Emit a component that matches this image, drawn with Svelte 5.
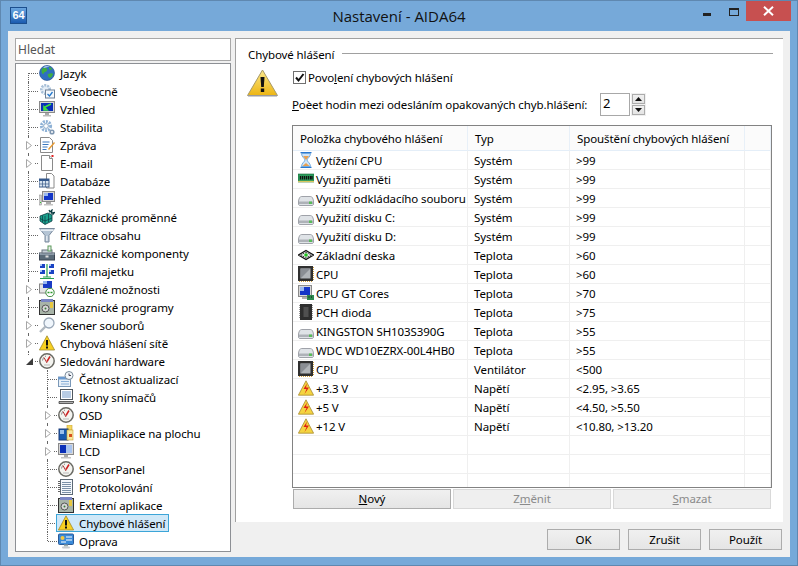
<script>
  const tree = [
    { t: 'Jazyk', i: 'globe' },
    { t: 'Všeobecně', i: 'gearcheck' },
    { t: 'Vzhled', i: 'monitorgreen' },
    { t: 'Stabilita', i: 'gears' },
    { t: 'Zpráva', i: 'note', x: 1 },
    { t: 'E-mail', i: 'page', x: 1 },
    { t: 'Databáze', i: 'db' },
    { t: 'Přehled', i: 'pc' },
    { t: 'Zákaznické proměnné', i: 'cube' },
    { t: 'Filtrace obsahu', i: 'funnel' },
    { t: 'Zákaznické komponenty', i: 'toolbox' },
    { t: 'Profil majetku', i: 'profile' },
    { t: 'Vzdálené možnosti', i: 'remote', x: 1 },
    { t: 'Zákaznické programy', i: 'programs' },
    { t: 'Skener souborů', i: 'magnifier', x: 1 },
    { t: 'Chybová hlášení sítě', i: 'warn', x: 1 },
    { t: 'Sledování hardware', i: 'gauge', open: 1, last: 1 },
    { t: 'Četnost aktualizací', i: 'clock', d: 1 },
    { t: 'Ikony snímačů', i: 'screen', d: 1 },
    { t: 'OSD', i: 'gauge', d: 1, x: 1 },
    { t: 'Miniaplikace na plochu', i: 'widget', d: 1, x: 1 },
    { t: 'LCD', i: 'lcd', d: 1, x: 1 },
    { t: 'SensorPanel', i: 'gauge', d: 1 },
    { t: 'Protokolování', i: 'log', d: 1 },
    { t: 'Externí aplikace', i: 'programs', d: 1 },
    { t: 'Chybové hlášení', i: 'warn', d: 1, sel: 1 },
    { t: 'Oprava', i: 'repair', d: 1, last: 1 }
  ];
  const rows = [
    ['hourglass', 'Vytížení CPU', 'Systém', '>99'],
    ['ram', 'Využití paměti', 'Systém', '>99'],
    ['disk', 'Využití odkládacího souboru', 'Systém', '>99'],
    ['disk', 'Využití disku C:', 'Systém', '>99'],
    ['disk', 'Využití disku D:', 'Systém', '>99'],
    ['mobo', 'Základní deska', 'Teplota', '>60'],
    ['cpu', 'CPU', 'Teplota', '>60'],
    ['gt', 'CPU GT Cores', 'Teplota', '>70'],
    ['pch', 'PCH dioda', 'Teplota', '>75'],
    ['disk', 'KINGSTON SH103S390G', 'Teplota', '>55'],
    ['disk', 'WDC WD10EZRX-00L4HB0', 'Teplota', '>55'],
    ['cpu', 'CPU', 'Ventilátor', '<500'],
    ['volt', '+3.3 V', 'Napětí', '<2.95, >3.65'],
    ['volt', '+5 V', 'Napětí', '<4.50, >5.50'],
    ['volt', '+12 V', 'Napětí', '<10.80, >13.20'],
    ['', '', '', ''],
    ['', '', '', ''],
    ['', '', '', '']
  ];
</script>

{#snippet icon(n)}
  <svg class="ico" width="16" height="16" viewBox="0 0 16 16">
    {#if n === 'globe'}
      <circle cx="8" cy="8" r="7.5" fill="#2f6fc0" stroke="#1c4a8a" stroke-width=".6"/>
      <path d="M3 4c2-2 4-1 5 0s-1 3-2 3-1 2-2 2-2-3-1-5zM9 9c2-1 5-1 5 0s-2 4-3 4-3-3-2-4zM10 2c1 0 3 1 3 2s-2 1-3 0z" fill="#3fae3f"/>
      <path d="M4 2.500C6 1 9 1 11 2 8 2 6 3 4 2.500z" fill="#cfe4fa"/>
    {:else if n === 'gearcheck'}
      <circle cx="6.500" cy="6.500" r="4.200" fill="#e4edf6" stroke="#a8c0d8" stroke-width="2.600" stroke-dasharray="2 1"/>
      <rect x="6.500" y="7" width="9" height="8" fill="#f4f8fc" stroke="#6c7f94"/>
      <path d="M8.500 11l2 2 3-4" fill="none" stroke="#2277cc" stroke-width="1.300"/>
    {:else if n === 'monitorgreen'}
      <rect x=".5" y=".5" width="15" height="11" fill="#d8d8d8" stroke="#8a8a8a"/>
      <rect x="2" y="2" width="12" height="8" fill="#0a2fb8"/>
      <path d="M12 3L6 6M5 9l0-3 3 3z" stroke="#3fe03f" stroke-width="1.600" fill="#3fe03f"/>
      <rect x="6" y="12" width="4" height="2" fill="#aaa"/><rect x="4" y="14" width="8" height="1.500" fill="#bbb"/>
    {:else if n === 'gears'}
      <circle cx="7" cy="7" r="4.600" fill="#fff" stroke="#8fb2d6" stroke-width="3" stroke-dasharray="2 1"/>
      <circle cx="7" cy="7" r="2.400" fill="#fff" stroke="#6f94ba" stroke-width=".8"/>
      <circle cx="13" cy="13" r="1.800" fill="#fff" stroke="#7e96b0" stroke-width="1.600"/>
    {:else if n === 'note'}
      <path d="M1.500.5h9l3 3v12h-12z" fill="#fff" stroke="#8a8a8a"/>
      <path d="M3.500 5h7M3.500 7.500h6M3.500 10h5M3.500 12.500h4" stroke="#3a78c0"/>
      <path d="M9 12l6-7 1 1-6 7z" fill="#e89a30"/>
    {:else if n === 'page'}
      <path d="M2.500.5h8l3 3v12h-11z" fill="#fff" stroke="#8a8a8a"/>
      <path d="M10.500.5v3h3" fill="#eee" stroke="#8a8a8a"/>
      <rect x="12.500" y="0" width="2" height="2" fill="#e02020"/>
    {:else if n === 'db'}
      <path d="M7.500.5h5l2.500 2.500v12H7.500z" fill="#fff" stroke="#8a8a8a"/>
      <rect x="0" y="6" width="10" height="8" fill="#d8e4f0" stroke="#3a5a88"/>
      <rect x="0" y="6" width="10" height="2" fill="#34588c"/>
      <path d="M3.500 8v6M6.500 8v6M0 11h10" stroke="#3a5a88" stroke-width=".7"/>
    {:else if n === 'pc'}
      <rect x="0" y="4" width="2.500" height="10" fill="#cfcfcf" stroke="#888" stroke-width=".5"/>
      <rect x="1" y="11" width="1" height="1" fill="#3c3"/>
      <rect x="3.500" y="0.500" width="12" height="10" fill="#d8d8d8" stroke="#8a8a8a"/>
      <rect x="5" y="2" width="9" height="7" fill="#1436c8"/><rect x="5" y="2" width="4" height="3" fill="#9ab8f0"/>
      <rect x="7" y="11" width="5" height="2" fill="#aaa"/><rect x="5" y="13" width="9" height="1.500" fill="#c4c4c4"/>
    {:else if n === 'cube'}
      <path d="M1 7l8-3 4 2v6l-7 3.500L1 12z" fill="#1aa08c" stroke="#0a3a40" stroke-width=".8"/>
      <path d="M1 9.500l5 2.500 7-3M6 7v8M3.500 6.500v7M9.500 5v8" stroke="#0a3a40" stroke-width=".7" fill="none"/>
      <path d="M10 1l1 2 2-2-.5 3 3-.5-2 2.500" fill="none" stroke="#0a3a40" stroke-width="1.200"/>
    {:else if n === 'funnel'}
      <path d="M.5 1.500h15L10 8.500v6.500H6V8.500z" fill="#b4c4d4" stroke="#7a8a9c"/>
      <path d="M1 2.500h14l-1 1.500H2z" fill="#e8eef4"/><rect x="7" y="9" width="1.500" height="5" fill="#dfe6ee"/>
    {:else if n === 'toolbox'}
      <rect x=".5" y="8" width="15" height="7" fill="#5a6a78" stroke="#3a4450"/>
      <rect x=".5" y="8" width="15" height="2" fill="#8c9aa8"/>
      <rect x="3" y="5" width="10" height="3" fill="#c8d0d8" stroke="#6a7480"/>
      <rect x="9" y="1" width="3" height="5" fill="#eee" stroke="#5a9a5a"/>
      <rect x="6.500" y="10.500" width="3" height="2" fill="#ddd"/>
    {:else if n === 'profile'}
      <rect x="1" y="1" width="5" height="4" fill="#1a44c4"/><rect x="10" y="1" width="5" height="4" fill="#1a44c4"/>
      <rect x="1" y="7" width="5" height="4" fill="#1a44c4"/><rect x="10" y="7" width="5" height="4" fill="#1a44c4"/>
      <rect x="1" y="1" width="2" height="2" fill="#a8c4f4"/><rect x="10" y="1" width="2" height="2" fill="#a8c4f4"/>
      <rect x="1" y="7" width="2" height="2" fill="#a8c4f4"/><rect x="10" y="7" width="2" height="2" fill="#a8c4f4"/>
      <path d="M8 1v13M4 14h8M1 15.500h14" stroke="#27a050" stroke-width="1.200"/>
    {:else if n === 'remote'}
      <rect x=".5" y="3" width="10" height="9" fill="#e4e4e4" stroke="#888"/>
      <rect x="4" y="0" width="9" height="7" fill="#1a3cc4"/><rect x="4" y="0" width="4" height="3" fill="#9ab8f0"/>
      <circle cx="11" cy="11.500" r="4.200" fill="#fff" stroke="#3a8a3a"/>
      <path d="M8.500 11.500h2M11.500 11.500h2" stroke="#2a9a2a" stroke-width="1.300"/>
    {:else if n === 'programs'}
      <rect x=".5" y="1.500" width="15" height="14" fill="#a8b4a8" stroke="#303030"/>
      <rect x="2" y="0" width="12" height="3" fill="#7a86c4"/>
      <rect x="11" y="3" width="3" height="6" fill="#e8c840"/>
      <circle cx="6.500" cy="9.500" r="3.500" fill="#d8d8d8" stroke="#555"/><circle cx="6.500" cy="9.500" r="1" fill="#3a7a3a"/>
    {:else if n === 'magnifier'}
      <circle cx="10" cy="6" r="5" fill="#f0f6fc" stroke="#9aa8b8" stroke-width="1.300"/>
      <path d="M6.500 9.500L1 15" stroke="#b0b8c0" stroke-width="2.400"/>
    {:else if n === 'warn'}
      <path d="M8 .8L15.600 15H.4z" fill="#f8d020" stroke="#a08a30" stroke-width=".8"/>
      <rect x="7" y="5" width="2" height="5.500" fill="#111"/><rect x="7" y="11.500" width="2" height="2" fill="#111"/>
    {:else if n === 'gauge'}
      <circle cx="8" cy="8" r="7.200" fill="#f4f4f0" stroke="#6a6a64" stroke-width="1.500"/>
      <path d="M8 8.500L11 3.500" stroke="#d02020" stroke-width="1.500"/>
      <path d="M3.500 7.500L4.500 4.500M6 3.500L7 3" stroke="#8a8a8a"/>
      <path d="M5 4.500L8 10" stroke="#b03030"/>
      <path d="M5 12h6" stroke="#bbb"/>
    {:else if n === 'clock'}
      <rect x=".5" y="6" width="12" height="9.500" fill="#e8f0f8" stroke="#7a98b8"/>
      <rect x=".5" y="6" width="12" height="2.500" fill="#6a9ad0"/>
      <path d="M3 10.500h8M3 13h8" stroke="#8ab0d8"/>
      <circle cx="11" cy="4.500" r="4" fill="#f4f8fc" stroke="#7a8a98"/>
      <path d="M11 2.500v2h2" fill="none" stroke="#445"/>
    {:else if n === 'screen'}
      <rect x="2.500" y=".5" width="12" height="10" fill="#fff" stroke="#505860"/>
      <rect x="4" y="2" width="9" height="7" fill="#b8cce4"/>
      <path d="M1 12.500h15l-1 2H1z" fill="#b0b0b0" stroke="#404040" stroke-width=".8"/>
    {:else if n === 'widget'}
      <rect x="9" y="0" width="5" height="5" fill="#f4d860" stroke="#c8a030" stroke-width=".6"/>
      <rect x="1" y="4" width="9" height="11" fill="#1a5cb0" stroke="#1a3a78"/>
      <rect x="2" y="5" width="4" height="4" fill="#9ac0ec"/>
      <rect x="9" y="5" width="6" height="10" fill="#f8e8a0" stroke="#c8a030" stroke-width=".6"/>
      <rect x="11" y="9" width="3" height="3" fill="#d8501c"/>
    {:else if n === 'lcd'}
      <rect x=".5" y=".5" width="15" height="11" fill="#d8d8d8" stroke="#8a8a8a"/>
      <rect x="2" y="2" width="12" height="8" fill="#0a2fb8"/><rect x="8" y="2" width="6" height="8" fill="#a8c4f0"/>
      <rect x="6" y="12" width="4" height="2" fill="#aaa"/><rect x="3" y="14" width="10" height="1.500" fill="#c4c4c4"/>
    {:else if n === 'log'}
      <rect x="2.500" y=".5" width="12" height="15" fill="#f4f8fc" stroke="#5c6874"/>
      <path d="M4 3.500h9M4 5.500h9M4 7.500h9M4 9.500h9M4 11.500h9M4 13.500h9" stroke="#7a90a8"/>
      <path d="M1 2v12" stroke="#333" stroke-width="1.500" stroke-dasharray="1 1"/>
    {:else if n === 'repair'}
      <rect x=".5" y="1" width="15" height="10.500" rx="1" fill="#3a8ad8" stroke="#2a5a98"/>
      <circle cx="4.500" cy="5" r="2" fill="#f4c840"/>
      <path d="M8 4h6M8 7h6M3 9h5" stroke="#fff" stroke-width="1.200"/>
      <rect x="6" y="11.500" width="4" height="2" fill="#9aa"/><rect x="4" y="13.500" width="8" height="2" rx="1" fill="#c8ccd0"/>
    {:else if n === 'hourglass'}
      <path d="M2.500 .5h11M2.500 15.500h11" stroke="#2a78d0" stroke-width="1.500"/>
      <path d="M3.500 1.500h9C12.500 5 9 6.500 9 8s3.500 3 3.500 6.500h-9C3.500 11 7 9.500 7 8S3.500 5 3.500 1.500z" fill="#cfe4f8" stroke="#5a9ad8" stroke-width=".8"/>
      <path d="M5 4h6L8 8zM4.500 14l3.500-3 3.500 3z" fill="#e8a050"/>
    {:else if n === 'ram'}
      <rect x="0" y="3" width="16" height="8" fill="#2a9a5a" stroke="#1a6a3a" stroke-width=".6"/>
      <path d="M2.500 5v3.500M4.500 5v3.500M6.500 5v3.500M8.500 5v3.500M10.500 5v3.500M12.500 5v3.500M14 5v3.500" stroke="#111" stroke-width="1.300"/>
      <path d="M0 10.500h16" stroke="#d8c860" stroke-width="1.200"/>
    {:else if n === 'disk'}
      <path d="M.5 11C1 8 2 6.500 3.500 6.500h9c1.500 0 2.500 1.500 3 4.500v3c0 .8-.5 1.500-1.500 1.500H2c-1 0-1.500-.7-1.500-1.500z" fill="#dfe3e7" stroke="#8a8e96" stroke-width=".8"/>
      <path d="M1 11.500h14v2.500H1z" fill="#aeb2b8"/>
      <rect x="11" y="11.500" width="3" height="2.500" fill="#58bc58"/>
    {:else if n === 'mobo'}
      <path d="M8 3.500l7.500 4.500L8 12.500.5 8z" fill="#e8e8e8" stroke="#111" stroke-width="1.300"/>
      <path d="M8 5L13 8l-5 3-5-3z" fill="none" stroke="#222" stroke-dasharray="1 1"/>
      <circle cx="8" cy="8" r="1.800" fill="#22c422"/>
    {:else if n === 'cpu'}
      <rect x="0" y="0" width="15" height="15" fill="#2f2f2f"/>
      <rect x="2.500" y="2.500" width="10" height="10" fill="#b0b4b8"/>
      <path d="M2.500 2.500h10l-10 10z" fill="#8a8e94"/>
      <path d="M15.500 1v13M1 15.500h14" stroke="#d0a040" stroke-dasharray="1 1"/>
    {:else if n === 'gt'}
      <rect x=".5" y=".5" width="13" height="11" fill="#d8d8d8" stroke="#8a8a8a"/>
      <rect x="2" y="2" width="10" height="8" fill="#1436c8"/><rect x="2" y="2" width="4" height="4" fill="#9ab8f0"/>
      <rect x="4" y="12" width="6" height="2" fill="#b0b0b0"/>
      <rect x="9" y="10" width="7" height="5" fill="#2f8a50"/>
      <path d="M10.500 12h1M13 12h1" stroke="#111"/>
    {:else if n === 'pch'}
      <rect x="2" y="0" width="12" height="16" fill="#2e2e2e"/>
      <rect x="5.500" y="3" width="5" height="10" fill="#505050"/>
      <path d="M1.500 1v14M14.500 1v14" stroke="#999" stroke-dasharray="1 1"/>
    {:else if n === 'volt'}
      <path d="M8 .8L15.600 15.200H.4z" fill="#f4d440" stroke="#a88a30" stroke-width=".8"/>
      <path d="M9 3.500L5.500 9h3L6.500 14l4.500-6.500H8z" fill="#e02010"/>
    {/if}
  </svg>
{/snippet}

<div class="window">
  <header class="title">
    <div class="logo">64</div>
    <div class="caption">Nastavení - AIDA64</div>
    <div class="controls">
      <span class="min"></span>
      <span class="max"></span>
      <span class="close">
        <svg width="11" height="10" viewBox="0 0 11 10"><path d="M1 .8l9 8.400M10 .8l-9 8.400" stroke="#fff" stroke-width="2"/></svg>
      </span>
    </div>
  </header>

  <div class="client">
    <aside class="left">
      <div class="search">Hledat</div>
      <ul class="tree">
        {#each tree as n}
          <li class="node" class:d1={n.d} class:last={n.last} class:top={n.t === 'Jazyk'}>
            <span class="vline"></span>
            <span class="hline"></span>
            {#if n.x}
              <svg class="exp" width="6" height="9" viewBox="0 0 6 9"><path d="M.5.5l5 4-5 4z" fill="#fff" stroke="#a6a6a6"/></svg>
            {/if}
            {#if n.open}
              <svg class="exp open" width="7" height="7" viewBox="0 0 7 7"><path d="M7 0v7H0z" fill="#3c3c3c"/></svg>
            {/if}
            <span class="item" class:sel={n.sel}>{@render icon(n.i)}<span class="lbl">{n.t}</span></span>
          </li>
        {/each}
      </ul>
    </aside>

    <section class="right">
      <div class="panel">
        <div class="group"><span>Chybové hlášení</span><i></i></div>
        <div class="settings">
          <svg class="bigwarn" width="31" height="28" viewBox="0 0 31 28">
            <defs><linearGradient id="wg" x1="0" y1="0" x2="0" y2="1"><stop offset="0" stop-color="#fbe88a"/><stop offset="1" stop-color="#edb512"/></linearGradient></defs>
            <path d="M15.500 1L30.500 26.500H.5z" fill="url(#wg)" stroke="#a89a68"/>
            <path d="M1 26h29v1.500H1z" fill="#9a9a9a"/>
            <path d="M13.500 8h4l-.7 10h-2.600z" fill="#111"/><rect x="13.800" y="19.500" width="3.400" height="3.500" fill="#111"/>
          </svg>
          <div class="opts">
            <label class="check">
              <span class="box">
                <svg width="11" height="11" viewBox="0 0 11 11"><path d="M2 5.500l2.500 3L9.500 2" fill="none" stroke="#111" stroke-width="2"/></svg>
              </span>
              <span>Povo<u>l</u>ení chybových hlášení</span>
            </label>
          </div>
        </div>
        <div class="hours">
          <span class="hlabel"><u>P</u>oèet hodin mezi odesláním opakovaných chyb.hlášení:</span>
          <span class="spin-in">2</span>
          <span class="spin">
            <b><svg width="7" height="4" viewBox="0 0 7 4"><path d="M3.500 0L7 4H0z" fill="#111"/></svg></b>
            <b><svg width="7" height="4" viewBox="0 0 7 4"><path d="M3.500 4L7 0H0z" fill="#111"/></svg></b>
          </span>
        </div>

        <div class="list">
          <table>
            <colgroup><col class="c1"/><col class="c2"/><col class="c3"/><col/></colgroup>
            <thead>
              <tr><th>Položka chybového hlášení</th><th>Typ</th><th>Spouštění chybových hlášení</th><th></th></tr>
            </thead>
            <tbody>
              {#each rows as r}
                <tr>
                  <td class="first">{#if r[0]}<span class="cell">{@render icon(r[0])}<span>{r[1]}</span></span>{/if}</td>
                  <td>{r[2]}</td>
                  <td>{r[3]}</td>
                  <td></td>
                </tr>
              {/each}
            </tbody>
          </table>
        </div>

        <div class="actions">
          <button class="btn strong"><u>N</u>ový</button>
          <button class="btn off">Z<u>m</u>ěnit</button>
          <button class="btn off"><u>S</u>mazat</button>
        </div>
      </div>

      <footer class="foot">
        <button class="btn wide">OK</button>
        <button class="btn wide">Zrušit</button>
        <button class="btn wide">Použít</button>
      </footer>
    </section>
  </div>
</div>

<style>
  :global(body) { margin: 0; background: #74a8d8; }
  .window {
    width: 798px; height: 566px; box-sizing: border-box;
    display: flex; flex-direction: column;
    background: #76a9d9; border: 1px solid #5f88b0;
    font: 11.5px "Noto Sans", "Liberation Sans", sans-serif; letter-spacing: -0.1px; color: #000; overflow: hidden;
  }
  .title { height: 30px; flex: none; display: flex; align-items: center; position: relative; }
  .logo {
    margin: 0 0 1px 9px; width: 15px; height: 15px; border: 1px solid #1c4f8e; background: linear-gradient(#6aa6e0, #1c5cb0);
    color: #fff; font: bold 11px/15px "Liberation Sans", sans-serif; letter-spacing: 0; text-align: center;
  }
  .caption { position: absolute; left: 0; right: 0; text-align: center; font-size: 15px; letter-spacing: 0; line-height: 28px; color: #111; font-family: "Open Sans", "Noto Sans", sans-serif; }
  .controls { position: absolute; right: 6px; top: 0; display: flex; align-items: flex-start; }
  .min { width: 8px; height: 3px; background: #222; margin: 12px 18px 0 0; }
  .max { width: 8px; height: 5px; border: 1px solid #222; border-top-width: 2px; margin: 7px 7px 0 0; }
  .close { width: 45px; height: 20px; background: #c75050; display: flex; align-items: center; justify-content: center; }

  .client {
    flex: 1; margin: 0 7px 8px; box-sizing: border-box; background: #f0f0f0;
    padding: 7px 7px 5px 7px; display: flex; gap: 4px; min-height: 0;
  }
  .left { width: 216px; flex: none; display: flex; flex-direction: column; gap: 2px; }
  .search {
    height: 23px; box-sizing: border-box; border: 1px solid #a8a8a8; background: #fff;
    padding-left: 2px; line-height: 21px; color: #555; font-size: 12px; letter-spacing: 0;
  }
  .tree {
    list-style: none; margin: 0; padding: 0; flex: 1; box-sizing: border-box;
    border: 1px solid #8d9095; background: #fff; overflow: hidden;
  }
  .node { position: relative; height: 18px; padding-left: 23px; display: flex; align-items: center; }
  .node.d1 { padding-left: 42px; }
  .vline { position: absolute; left: 12px; top: 0; bottom: 0; border-left: 1px dotted #666; }
  .node.d1 .vline { left: 31px; }
  .node.top .vline { top: 9px; }
  .node.last .vline { bottom: 9px; }
  .hline { position: absolute; left: 13px; width: 9px; top: 9px; border-top: 1px dotted #666; }
  .node.d1 .hline { left: 32px; }
  .exp { position: absolute; left: 10px; top: 5px; background: #fff; outline: 2px solid #fff; }
  .exp.open { top: 6px; }
  .node.d1 .exp { left: 29px; }
  .item { display: inline-flex; align-items: center; position: relative; height: 18px; box-sizing: border-box; }
  .item .lbl { margin-left: 5px; padding-right: 4px; white-space: nowrap; }
  .item.sel { background: #cfe8f8; outline: 1px solid #3ca5d8; outline-offset: -1px; padding-left: 2px; margin-left: -2px; width: 113px; }
  .ico { flex: none; display: block; }

  .right { flex: 1; display: flex; flex-direction: column; min-width: 0; }
  .panel {
    height: 484px; box-sizing: border-box; background: #fff;
    border-top: 1px solid #a0a0a0; border-left: 1px solid #a0a0a0;
    padding: 7px 10px 0 12px; display: flex; flex-direction: column;
  }
  .group { display: flex; align-items: center; gap: 8px; height: 17px; }
  .group i { flex: 1; height: 1px; background: #a0a0a0; margin-top: -2px; }
  .settings { display: flex; margin-top: 6px; height: 28px; }
  .bigwarn { flex: none; margin-left: -1px; }
  .opts { margin-left: 15px; }
  .check { display: flex; align-items: center; gap: 2px; height: 16px; }
  .box { width: 11px; height: 11px; border: 1px solid #707070; display: block; background: #fff; }
  .box svg { display: block; }
  .hours { display: flex; align-items: center; margin: -5px 0 0 44px; height: 24px; }
  .hlabel { width: 308px; flex: none; white-space: nowrap; }
  .spin-in { width: 30px; height: 23px; box-sizing: border-box; border: 1px solid #a8a8a8; padding-left: 2px; line-height: 19px; font-size: 13px; }
  .spin { margin-left: 1px; width: 15px; height: 23px; background: #f0f0f0; display: flex; flex-direction: column; gap: 1px; padding: 1px 1px; box-sizing: border-box; }
  .spin b { flex: 1; border: 1px solid #acacac; background: linear-gradient(#f0f0f0, #e4e4e4); display: flex; align-items: center; justify-content: center; }
  .spin svg { display: block; }

  .list {
    margin: 9px 0 0 44px; width: 480px; height: 363px; flex: none; box-sizing: border-box;
    border: 1px solid #828282; overflow: hidden; background: #fff;
  }
  table { border-collapse: separate; border-spacing: 0; table-layout: fixed; width: 478px; }
  .c1 { width: 175px; } .c2 { width: 102px; } .c3 { width: 175px; }
  th {
    height: 25px; box-sizing: border-box; padding: 0 0 0 7px; text-align: left; font-weight: 400; background: #fbfbfb;
    border-right: 1px solid #e8f0f8; border-bottom: 1px solid #e4eef8;
  }
  td {
    height: 19px; box-sizing: border-box; padding: 0 0 0 6px; white-space: nowrap; overflow: hidden;
    border-right: 1px solid #efefef; border-bottom: 1px solid #efefef; line-height: 17px;
  }
  td.first { padding-left: 5px; }
  .cell { display: flex; align-items: center; gap: 2px; }
  .actions { display: flex; gap: 2px; margin: 1px 0 0 45px; }
  .btn {
    font: inherit; letter-spacing: inherit; color: #000; box-sizing: border-box; border: 1px solid #acacac; background: linear-gradient(#f0f0f0, #e5e5e5); padding: 0; margin: 0;
  }
  .actions .btn { width: 158px; height: 20px; line-height: 16px; }
  .btn.off { color: #8b8b8b; border-color: #d9d9d9; background: #efefef; }
  .foot { display: flex; justify-content: flex-end; gap: 8px; margin: 7px 1px 0 0; }
  .btn.wide { width: 73px; height: 21px; }
</style>
